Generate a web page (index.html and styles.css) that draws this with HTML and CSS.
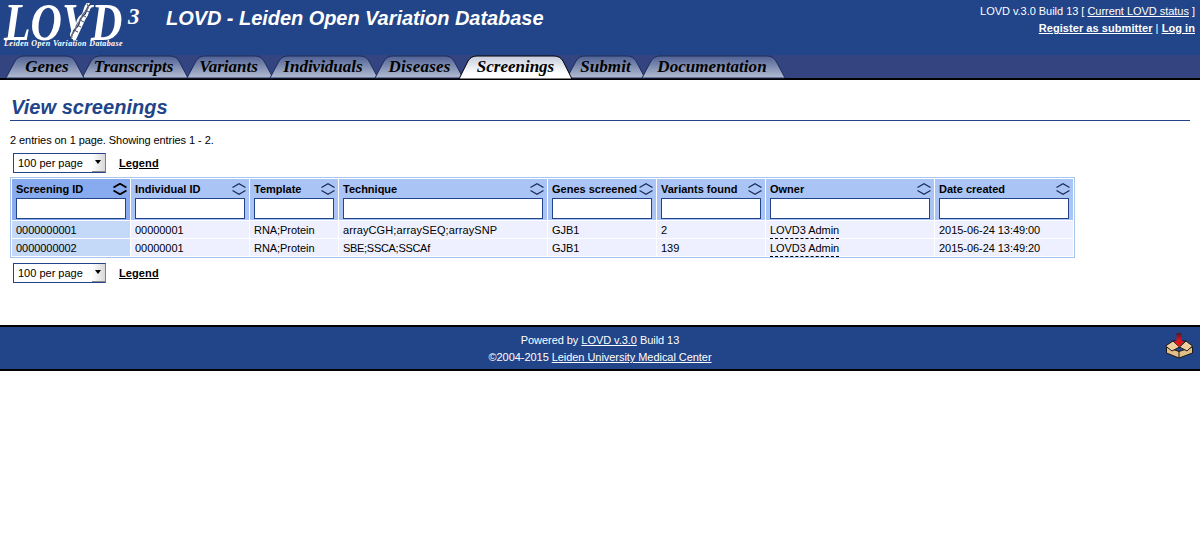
FILE: index.html
```html
<!DOCTYPE html>
<html lang="en">
<head>
<meta charset="utf-8">
<title>LOVD - Leiden Open Variation Database</title>
<link rel="stylesheet" href="styles.css">
</head>
<body>
<svg class="defs" width="0" height="0" aria-hidden="true">
  <defs>
    <linearGradient id="tabfill" x1="0" y1="0" x2="0" y2="1">
      <stop offset="0" stop-color="#4e6093"/><stop offset="1" stop-color="#b4bdd2"/>
    </linearGradient>
    <linearGradient id="tabactive" x1="0" y1="0" x2="0" y2="1">
      <stop offset="0" stop-color="#c5cbdc"/><stop offset="0.75" stop-color="#ffffff"/>
    </linearGradient>
    <linearGradient id="arrowfill" x1="0" y1="0" x2="0" y2="1">
      <stop offset="0" stop-color="#4a1a2a"/><stop offset="0.55" stop-color="#e0141e"/>
    </linearGradient>
    <symbol id="sort" viewBox="0 0 14 12">
      <path d="M0.5 4.5 L7 0.7 L13.5 4.5 M0.5 7.5 L7 11.3 L13.5 7.5" fill="none" stroke="currentColor"/>
    </symbol>
  </defs>
</svg>
<header class="top">
  <div class="logo">
    <div class="logo-mark"><span class="logo-word">LOVD</span><span class="logo-three">3</span>
      <svg class="helix" width="26" height="36" viewBox="0 0 26 36" aria-hidden="true">
        <path d="M20 1 C14 6 18 10 13 14 C7 18 11 22 6 26 C3 29 4 31 1 35" fill="none" stroke="#fff" stroke-width="6"/>
        <path d="M21 1 C14 5 19 9 13 13 C7 17 12 21 6 25 C2 28 4 31 0 35" fill="none" stroke="#2c3550" stroke-width="1.3"/>
        <path d="M17 1 C22 6 12 9 12 14 C12 18 5 20 6 25 C6 29 0 30 2 35" fill="none" stroke="#6c7488" stroke-width="1.3"/>
        <path d="M15 7 L19 9 M12 12 L16 14 M10 17 L14 19 M7 22 L11 24 M4 27 L8 29" stroke="#444c64" stroke-width="1"/>
      </svg>
    </div>
    <div class="logo-sub">Leiden Open Variation Database</div>
  </div>
  <h1 class="site-title">LOVD - Leiden Open Variation Database</h1>
  <div class="status">
    <div class="status-line">LOVD v.3.0 Build 13 [ <a href="#">Current LOVD status</a> ]</div>
    <div class="status-links"><a href="#"><b>Register as submitter</b></a> | <a href="#"><b>Log in</b></a></div>
  </div>
</header>
<nav class="tabs">
  <a class="tab t1" href="#"><svg width="78" height="23"><path d="M0 23 L9 6 Q12 1 18 1 H60 Q66 1 69 6 L78 23 Z" fill="url(#tabfill)" stroke="#1c2c5c"/></svg><span>Genes</span></a>
  <a class="tab t2" href="#"><svg width="106" height="23"><path d="M0 23 L9 6 Q12 1 18 1 H88 Q94 1 97 6 L106 23 Z" fill="url(#tabfill)" stroke="#1c2c5c"/></svg><span>Transcripts</span></a>
  <a class="tab t3" href="#"><svg width="86" height="23"><path d="M0 23 L9 6 Q12 1 18 1 H68 Q74 1 77 6 L86 23 Z" fill="url(#tabfill)" stroke="#1c2c5c"/></svg><span>Variants</span></a>
  <a class="tab t4" href="#"><svg width="108" height="23"><path d="M0 23 L9 6 Q12 1 18 1 H90 Q96 1 99 6 L108 23 Z" fill="url(#tabfill)" stroke="#1c2c5c"/></svg><span>Individuals</span></a>
  <a class="tab t5" href="#"><svg width="88" height="23"><path d="M0 23 L9 6 Q12 1 18 1 H70 Q76 1 79 6 L88 23 Z" fill="url(#tabfill)" stroke="#1c2c5c"/></svg><span>Diseases</span></a>
  <a class="tab t6 active" href="#"><svg width="113" height="23"><path d="M0 24 L9 6 Q12 1 18 1 H95 Q101 1 104 6 L113 24 Z" fill="url(#tabactive)" stroke="#000"/></svg><span>Screenings</span></a>
  <a class="tab t7" href="#"><svg width="78" height="23"><path d="M0 23 L9 6 Q12 1 18 1 H60 Q66 1 69 6 L78 23 Z" fill="url(#tabfill)" stroke="#1c2c5c"/></svg><span>Submit</span></a>
  <a class="tab t8" href="#"><svg width="143" height="23"><path d="M0 23 L9 6 Q12 1 18 1 H125 Q131 1 134 6 L143 23 Z" fill="url(#tabfill)" stroke="#1c2c5c"/></svg><span>Documentation</span></a>
</nav>
<main class="content">
  <h2 class="page-title">View screenings</h2>
  <p class="entries">2 entries on 1 page. Showing entries 1 - 2.</p>
  <div class="pager">
    <div class="select"><span class="select-text">100 per page</span><span class="select-btn"></span></div>
    <a class="legend" href="#">Legend</a>
  </div>
  <table class="data">
    <colgroup>
      <col class="w118"><col class="w118"><col class="w88"><col class="w208"><col class="w108"><col class="w108"><col class="w168"><col class="w138">
    </colgroup>
    <thead>
      <tr>
        <th class="sorted"><div class="th-head">Screening ID<svg class="sort"><use href="#sort"/></svg></div><input type="text"></th>
        <th><div class="th-head">Individual ID<svg class="sort"><use href="#sort"/></svg></div><input type="text"></th>
        <th><div class="th-head">Template<svg class="sort"><use href="#sort"/></svg></div><input type="text"></th>
        <th><div class="th-head">Technique<svg class="sort"><use href="#sort"/></svg></div><input type="text"></th>
        <th><div class="th-head">Genes screened<svg class="sort"><use href="#sort"/></svg></div><input type="text"></th>
        <th><div class="th-head">Variants found<svg class="sort"><use href="#sort"/></svg></div><input type="text"></th>
        <th><div class="th-head">Owner<svg class="sort"><use href="#sort"/></svg></div><input type="text"></th>
        <th><div class="th-head">Date created<svg class="sort"><use href="#sort"/></svg></div><input type="text"></th>
      </tr>
    </thead>
    <tbody>
      <tr>
        <td class="sorted">0000000001</td><td>00000001</td><td>RNA;Protein</td><td class="wide">arrayCGH;arraySEQ;arraySNP</td><td>GJB1</td><td>2</td><td><span class="owner">LOVD3 Admin</span></td><td>2015-06-24 13:49:00</td>
      </tr>
      <tr>
        <td class="sorted">0000000002</td><td>00000001</td><td>RNA;Protein</td><td class="narrow">SBE;SSCA;SSCAf</td><td>GJB1</td><td>139</td><td><span class="owner">LOVD3 Admin</span></td><td>2015-06-24 13:49:20</td>
      </tr>
    </tbody>
  </table>
  <div class="pager pager-bottom">
    <div class="select"><span class="select-text">100 per page</span><span class="select-btn"></span></div>
    <a class="legend" href="#">Legend</a>
  </div>
</main>
<footer class="foot">
  <div class="foot-line">Powered by <a href="#">LOVD v.3.0</a> Build 13</div>
  <div class="foot-line">©2004-2015 <a href="#">Leiden University Medical Center</a></div>
  <svg class="box" width="30" height="27" viewBox="0 0 30 27" aria-hidden="true">
    <path d="M8 9 H22 L16 16 Z" fill="#6e4f26" stroke="#1a1a1a"/>
    <path d="M2.5 15 L15 19.5 L28.5 15 V21 L15 26 L2.5 21 Z" fill="#e3bf88" stroke="#1a1a1a" stroke-linejoin="round"/>
    <path d="M15 19.5 V26" stroke="#1a1a1a"/>
    <path d="M1.5 14 L9 9 L15.5 15 L8 19 Z" fill="#edce9c" stroke="#1a1a1a" stroke-linejoin="round"/>
    <path d="M28.5 14 L22 9 L15.5 15 L23 19 Z" fill="#edce9c" stroke="#1a1a1a" stroke-linejoin="round"/>
    <path d="M12.5 1 H17.5 V9 H20 L15 15 L10 9 H12.5 Z" fill="url(#arrowfill)"/>
  </svg>
</footer>
</body>
</html>
```
FILE: styles.css
```css
* { box-sizing: border-box; }
html, body { margin: 0; padding: 0; background: #fff; }
body { font-family: "Liberation Sans", Arial, sans-serif; font-size: 11px; color: #000; }
.defs { position: absolute; }
a { color: inherit; }

.top { height: 55px; background: #224488; color: #fff; display: flex; position: relative; }
.logo { width: 166px; padding: 0 0 0 4px; flex: none; }
.logo-mark { position: relative; height: 40px; padding-top: 4px; font-family: "Liberation Serif", serif; font-style: italic; font-weight: bold; white-space: nowrap; display: flex; align-items: flex-start; }
.logo-word { font-size: 53px; line-height: 36px; width: 119px; display: block; flex: none; transform: scaleX(0.82); transform-origin: left center; }
.logo-three { font-size: 23px; line-height: 18px; margin-left: 5px; margin-top: 4px; display: block; }
.helix { position: absolute; left: 66px; top: 3px; }
.logo-sub { font-family: "Liberation Serif", serif; font-weight: bold; font-style: italic; font-size: 8px; line-height: 8px; white-space: nowrap; letter-spacing: 0.37px; }
.site-title { margin: 7px 0 0; font-size: 20px; line-height: 23px; font-weight: bold; font-style: italic; color: #fff; letter-spacing: -0.05px; }
.status { margin-left: auto; padding: 3px 5px 0 0; text-align: right; line-height: 17px; }
.status-line { letter-spacing: -0.03px; }
.status-links { letter-spacing: 0.06px; }

.tabs { height: 25px; background: #334480; border-bottom: 2px solid #000; padding-left: 6px; display: flex; align-items: flex-start; }
.tab { position: relative; display: flex; align-items: center; justify-content: center; height: 23px; flex: none; text-decoration: none; font-family: "Liberation Serif", serif; font-style: italic; font-weight: bold; font-size: 17px; color: #000; }
.tab svg { position: absolute; left: 0; top: 0; overflow: visible; }
.tab span { position: relative; padding-top: 1px; }
.t1 { width: 78px; padding-left: 4px; z-index: 1; }
.t2 { width: 106px; margin-left: -2px; padding-right: 3px; }
.t3 { width: 86px; margin-left: -1px; padding-right: 3px; }
.t4 { width: 108px; margin-left: -3px; padding-right: 2px; }
.t5 { width: 88px; margin-left: -3px; padding-left: 1px; letter-spacing: 0.2px; }
.t6 { width: 113px; margin-left: -4px; z-index: 2; }
.t7 { width: 78px; margin-left: -5px; padding-right: 1px; letter-spacing: 0.1px; }
.t8 { width: 143px; margin-left: -3px; padding-right: 3px; letter-spacing: 0.05px; }

.content { padding: 15px 10px 42px; }
.page-title { margin: 0; padding-left: 1px; font-size: 20px; line-height: 25px; font-weight: bold; font-style: italic; color: #224488; border-bottom: 1px solid #224488; height: 26px; width: 1180px; letter-spacing: 0.05px; }
.entries { margin: 13px 0 0; line-height: 13px; letter-spacing: -0.07px; }
.pager { display: flex; align-items: center; margin: 6px 0 4px 3px; height: 20px; }
.pager-bottom { margin: 5px 0 0 3px; }
.select { width: 93px; height: 20px; border: 1px solid #224488; border-right-color: #808080; display: flex; align-items: center; justify-content: space-between; background: #fff; }
.select-text { padding-left: 4px; }
.select-btn { width: 13px; height: 18px; background: linear-gradient(to right, #fff, #d8d8d8); border-bottom: 1px solid #8a8a8a; position: relative; }
.select-btn::after { content: ""; position: absolute; left: 3px; top: 6px; border-left: 3.5px solid transparent; border-right: 3.5px solid transparent; border-top: 4px solid #000; }
.legend { margin-left: 13px; font-weight: bold; letter-spacing: 0.1px; }

.data { table-layout: fixed; border-collapse: separate; border-spacing: 1px; border: 1px solid #a8c4f0; width: 1065px; background: #fff; }
.w118 { width: 118px; }
.w88 { width: 88px; }
.w208 { width: 208px; }
.w108 { width: 108px; }
.w168 { width: 168px; }
.w138 { width: 138px; }
.data th { background: #aac4f6; padding: 0 4px; height: 41px; text-align: left; vertical-align: top; font-weight: bold; white-space: nowrap; }
.data th.sorted { background: #88aaee; }
.th-head { display: flex; justify-content: space-between; align-items: center; height: 19px; position: relative; }
.sort { width: 14px; height: 12px; flex: none; margin-right: -1px; color: #1a2a55; stroke-width: 1.2; }
.sorted .sort { color: #000; stroke-width: 1.8; }
.data input { display: block; width: 100%; height: 21px; border: 1px solid #224488; padding: 0; margin: 0; background: #fff; border-radius: 0; }
.data td { background: #eef0ff; padding: 1px 4px 0; height: 17px; line-height: 16px; white-space: nowrap; letter-spacing: -0.05px; }
.data td.sorted { background: #c4d8f8; }
.data td.wide { letter-spacing: 0.1px; }
.data td.narrow { letter-spacing: -0.3px; }
.owner { display: block; width: fit-content; height: 17px; margin-bottom: -1px; border-bottom: 1px dashed #000; }

.foot { position: relative; height: 46px; background: #224488; border-top: 2px solid #000; border-bottom: 2px solid #000; color: #fff; text-align: center; padding-top: 5px; }
.foot-line { line-height: 17px; letter-spacing: -0.05px; }
.box { position: absolute; right: 6px; top: 5px; }
```
